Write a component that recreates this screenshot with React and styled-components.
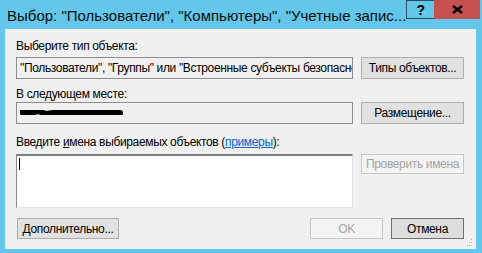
import styled, { createGlobalStyle } from "styled-components";

const GlobalStyle = createGlobalStyle`
  html, body {
    margin: 0;
    padding: 0;
    background: #62c7ea;
  }
  * {
    box-sizing: border-box;
  }
`;

const Window = styled.div`
  width: 482px;
  height: 253px;
  background: #62c7ea;
  display: flex;
  flex-direction: column;
  font-family: "Liberation Sans", Arial, sans-serif;
  font-size: 12px;
  letter-spacing: -0.35px;
  color: #000;
  overflow: hidden;
`;

const TitleBar = styled.div`
  height: 29px;
  display: flex;
  align-items: flex-start;
  justify-content: space-between;
  padding: 0 5px 0 7px;
`;

const Title = styled.div`
  padding-top: 7px;
  font-size: 15px;
  line-height: 17px;
  letter-spacing: 0;
  color: #0c0c0c;
  white-space: nowrap;
`;

const Controls = styled.div`
  display: flex;
`;

const CaptionButton = styled.div`
  height: 19px;
  width: ${(p) => p.$w}px;
  display: flex;
  align-items: center;
  justify-content: center;
  background: ${(p) => (p.$close ? "#c75050" : "transparent")};
  border: 1px solid ${(p) => (p.$close ? "#c75050" : "#2c4d5c")};
  border-right: ${(p) => (p.$close ? "1px solid #c75050" : "none")};
  font-weight: bold;
  font-size: 14px;
  letter-spacing: 0;
  color: #000;
`;

const Client = styled.div`
  flex: 1;
  margin: 0 6px 4px 5px;
  background: #f0f0f0;
  padding: 0 12px 0 11px;
  display: flex;
  flex-direction: column;
  position: relative;
`;

const Label = styled.div`
  margin-top: ${(p) => p.$mt}px;
  height: 15px;
  line-height: 15px;
  white-space: nowrap;
`;

const Row = styled.div`
  display: flex;
  align-items: flex-start;
  gap: 8px;
  margin-top: ${(p) => p.$mt || 0}px;
`;

const Field = styled.div`
  flex: 0 0 337px;
  height: 22px;
  border: 1px solid #8c8c8c;
  background: #f0f0f0;
  padding: 0 3px;
  white-space: nowrap;
  overflow: hidden;
  display: flex;
  align-items: center;
`;

const Area = styled.div`
  flex: 0 0 337px;
  height: 54px;
  background: #fff;
  border-style: solid;
  border-width: 2px 1px 1px 1px;
  border-color: #7e7e7e #e3e3e3 #e3e3e3 #8a8a8a;
  padding: 2px 2px;
`;

const Caret = styled.div`
  width: 1px;
  height: 12px;
  background: #000;
`;

const Button = styled.div`
  flex: 0 0 ${(p) => p.$w || 103}px;
  height: ${(p) => p.$h || 22}px;
  display: flex;
  align-items: center;
  justify-content: center;
  white-space: nowrap;
  border: 1px solid
    ${(p) => (p.$disabled ? "#c6c6c6" : p.$default ? "#707070" : "#adadad")};
  background: ${(p) =>
    p.$disabled ? "#f4f4f4" : p.$default ? "#dddddd" : "#e1e1e1"};
  color: ${(p) => (p.$disabled ? "#a3a3a3" : "#000")};
`;

const Footer = styled.div`
  margin-top: 10px;
  display: flex;
  gap: 8px;
  padding-left: 1px;
`;

const Spacer = styled.div`
  flex: 1;
`;

const Link = styled.span`
  color: #0066cc;
  text-decoration: underline;
`;

const Accel = styled.span`
  text-decoration: underline;
`;

const Grip = styled.svg`
  position: absolute;
  right: 3px;
  bottom: 2px;
`;

const Redacted = () => (
  <svg width="106" height="12" viewBox="0 0 106 12">
    <defs>
      <filter id="soft">
        <feGaussianBlur stdDeviation="0.6" />
      </filter>
    </defs>
    <path
      d="M2 5 L10 6 L18 4 L26 7 L40 5 L55 6 L70 5 L85 6 L100 6"
      stroke="#000"
      strokeWidth="6"
      strokeLinecap="round"
      fill="none"
      filter="url(#soft)"
    />
  </svg>
);

export default function App() {
  return (
    <Window>
      <GlobalStyle />
      <TitleBar>
        <Title>
          Выбор: "Пользователи", "Компьютеры", "Учетные запис...
        </Title>
        <Controls>
          <CaptionButton $w={28}>?</CaptionButton>
          <CaptionButton $w={46} $close>
            <svg width="11" height="9" viewBox="0 0 11 9">
              <path d="M1 1 L10 8 M10 1 L1 8" stroke="#000" strokeWidth="2.4" />
            </svg>
          </CaptionButton>
        </Controls>
      </TitleBar>
      <Client>
        <Label $mt={10}>Выберите тип объекта:</Label>
        <Row $mt={3}>
          <Field>
            "Пользователи", "Группы" или "Встроенные субъекты безопасности"
          </Field>
          <Button>Типы объектов...</Button>
        </Row>
        <Label $mt={8}>В следующем месте:</Label>
        <Row>
          <Field>
            <Redacted />
          </Field>
          <Button>Размещение...</Button>
        </Row>
        <Label $mt={11}>
          Введите <Accel>и</Accel>мена выбираемых объектов (<Link>примеры</Link>):
        </Label>
        <Row $mt={4}>
          <Area>
            <Caret />
          </Area>
          <Button $h={20} $disabled>
            Проверить имена
          </Button>
        </Row>
        <Footer>
          <Button $w={102} $h={21}>
            Дополнительно...
          </Button>
          <Spacer />
          <Button $w={73} $h={21} $disabled>
            OK
          </Button>
          <Button $w={73} $h={21} $default>
            Отмена
          </Button>
        </Footer>
        <Grip width="8" height="8" viewBox="0 0 8 8">
          <g fill="#b8b8b8">
            <rect x="6" y="0" width="1" height="1" />
            <rect x="4" y="3" width="1" height="1" />
            <rect x="6" y="3" width="1" height="1" />
            <rect x="2" y="6" width="1" height="1" />
            <rect x="4" y="6" width="1" height="1" />
            <rect x="6" y="6" width="1" height="1" />
          </g>
        </Grip>
      </Client>
    </Window>
  );
}
